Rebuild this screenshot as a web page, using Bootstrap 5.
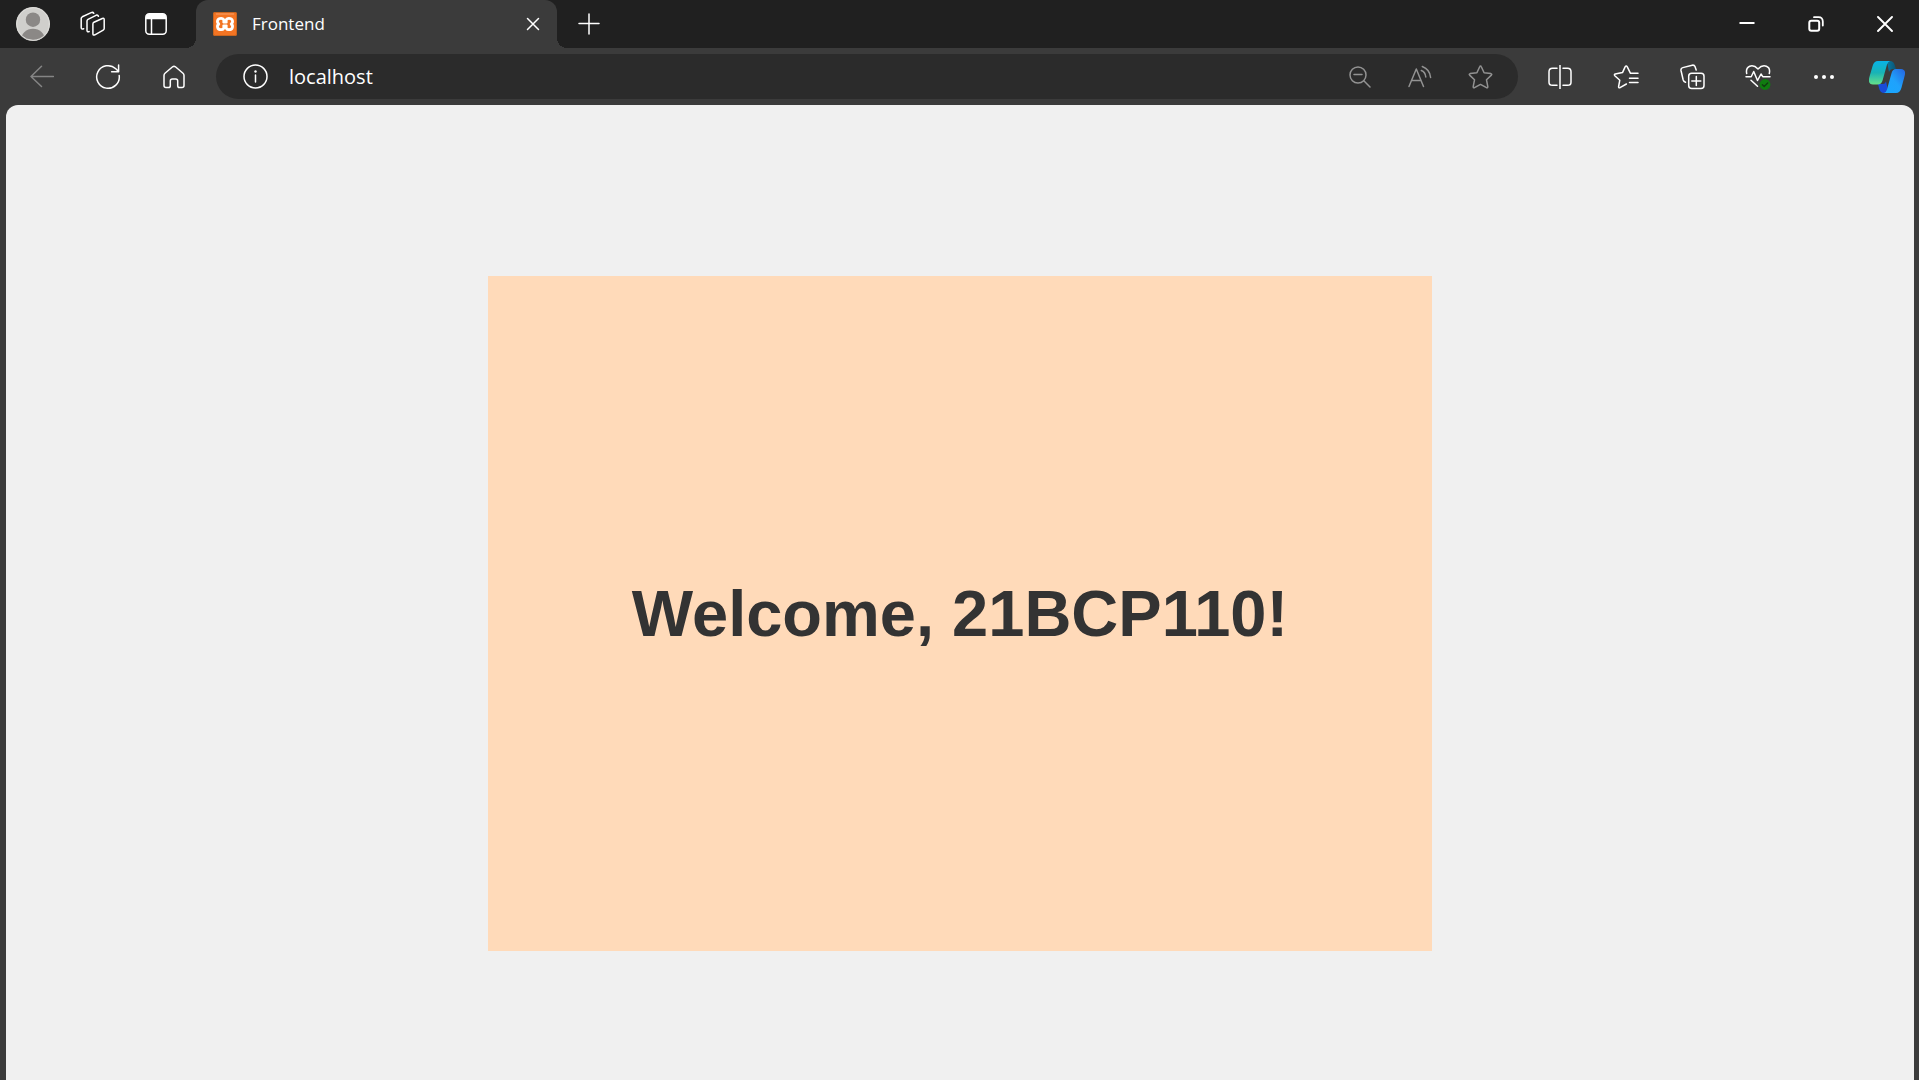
<!DOCTYPE html>
<html lang="en">
<head>
<meta charset="utf-8">
<meta name="viewport" content="width=device-width, initial-scale=1">
<title>Frontend</title>
<link href="https://cdn.jsdelivr.net/npm/bootstrap@5.3.0/dist/css/bootstrap.min.css" rel="stylesheet">
<style>
  :root { --strip: #202020; --bar: #3b3b3b; --field: #2b2b2b; --page: #f0f0f0; }
  body { background: var(--bar); color: #fff; font-family: "Open Sans", "Noto Sans", sans-serif; }
  .tab-strip { background: var(--strip); height: 48px; }
  .tool-row { height: 57px; padding-left: 9px; }
  .icon-btn { display: flex; align-items: center; justify-content: center; flex: none; height: 45px; width: 66px; padding: 0; border: 0; background: transparent; color: #fff; }
  .icon-btn svg, .site-info svg { fill: none; stroke: currentColor; stroke-width: 1.5; stroke-linecap: round; stroke-linejoin: round; }
  .w-workspaces { width: 54px; }
  .w-tabs { width: 72px; }
  .w-field { width: 60px; color: #929292; }
  .w-window { width: 69px; }
  .w-new { width: 64px; }
  .w-close { width: 24px; }
  .w-copilot { width: 62px; padding-right: 2px; }
  .is-off { color: #858585; }
  .browser-tab { position: relative; width: 361px; background: var(--bar); border-radius: 12px 12px 0 0; margin-left: 4px; padding: 0 12px 0 17px; gap: 15px; font-size: 17px; }
  .browser-tab::before, .browser-tab::after { content: ""; position: absolute; bottom: 0; width: 10px; height: 10px; }
  .browser-tab::before { right: 100%; background: radial-gradient(circle at 0 0, transparent 10px, var(--bar) 10px); }
  .browser-tab::after { left: 100%; background: radial-gradient(circle at 100% 0, transparent 10px, var(--bar) 10px); }
  .address { height: 45px; background: var(--field); margin: 0 9px; padding: 0 8px 0 27px; }
  .address input { color: #fff; background: transparent; border: 0; outline: 0; font-size: 20px; padding: 0 0 0 21px; min-width: 0; }
  .viewport { background: var(--page); border-radius: 12px 12px 0 0; margin: 0 5px 0 6px; padding-top: 171px; }
  .welcome { width: 944px; max-width: 100%; height: 675px; background: #ffdab9; color: #333; font-family: "Liberation Sans", Arial, sans-serif; }
  .welcome h1 { font-size: 65px; line-height: 75px; }
</style>
<script src="https://cdn.jsdelivr.net/npm/bootstrap@5.3.0/dist/js/bootstrap.bundle.min.js"></script>
</head>
<body class="vh-100 d-flex flex-column overflow-hidden">
<header>
  <div class="tab-strip d-flex align-items-center">
    <button class="icon-btn" aria-label="Profile">
      <svg width="34" height="34" viewBox="0 0 34 34"><defs><clipPath id="av"><circle cx="17" cy="17" r="16.5"/></clipPath></defs><circle cx="17" cy="17" r="17" fill="#d0cfcc" stroke="none"/><g clip-path="url(#av)" fill="#8b8886" stroke="none"><circle cx="17" cy="12.7" r="7.2"/><ellipse cx="17" cy="33" rx="12" ry="11.3"/></g><circle cx="17" cy="17" r="16.3" stroke="#deddda" stroke-width="1"/></svg>
    </button>
    <button class="icon-btn w-workspaces" aria-label="Workspaces">
      <svg width="26" height="26" viewBox="0 0 26 26"><path d="M14 11.200L22.300 7.500Q24.200 6.800 24.200 8.700V17.600Q24.200 18.700 23.200 19.200L14.900 23.800Q12.900 24.700 12.900 22.700V13Q12.900 11.800 14 11.200ZM9.200 20.500Q7.200 21.400 7 19.500V10Q7 8.800 8 8.300L16 4.300Q17.800 3.600 18.400 5.300M3.700 17.700Q1.200 18.700 1.200 16.500V7.600Q1.200 6.400 2.300 5.800L11.200 1.600Q13 .9 13.800 2.300"/></svg>
    </button>
    <button class="icon-btn w-tabs" aria-label="Tab actions">
      <svg width="22" height="22" viewBox="0 0 22 22"><rect x=".8" y=".8" width="20.400" height="20.400" rx="3.500"/><path d="M1 6V4Q1 1 4 1H18Q21 1 21 4V6Z" fill="currentColor" stroke="none"/><path d="M6.500 6V21M1 5.500H21"/></svg>
    </button>
    <div class="browser-tab d-flex align-items-center h-100">
      <svg width="24" height="24" viewBox="0 0 24 24" aria-hidden="true"><rect width="24" height="24" rx="2" fill="#f37423"/><path d="M3 2H21" stroke="#f9a06a"/><rect x=".5" y=".5" width="23" height="23" rx="1.500" fill="none" stroke="#c9651f"/><path d="M8.200 6.300C10.600 6.300 11.300 8.100 10.700 10.200H13.300C12.700 8.100 13.400 6.300 15.800 6.300C19.900 6.300 20.500 10.300 18.200 12C20.500 13.700 19.900 17.700 15.800 17.700C13.400 17.700 12.700 15.900 13.300 13.800H10.700C11.300 15.900 10.600 17.700 8.200 17.700C4.100 17.700 3.500 13.700 5.800 12C3.500 10.300 4.100 6.300 8.200 6.300Z" fill="none" stroke="#fff" stroke-width="2.800" stroke-linejoin="round"/></svg>
      <span class="flex-grow-1">Frontend</span>
      <button class="icon-btn w-close" aria-label="Close tab"><svg width="14" height="14" viewBox="0 0 14 14"><path d="M1.500 1.500L12.500 12.500M12.500 1.500L1.500 12.500"/></svg></button>
    </div>
    <button class="icon-btn w-new" aria-label="New tab"><svg width="22" height="22" viewBox="0 0 22 22"><path d="M11 1V21M1 10.500H21" stroke-width="1.500"/></svg></button>
    <div class="d-flex ms-auto">
      <button class="icon-btn w-window" aria-label="Minimize"><svg width="16" height="16" viewBox="0 0 16 16"><path d="M.5 7H15.500" stroke-width="2" stroke-linecap="butt"/></svg></button>
      <button class="icon-btn w-window" aria-label="Restore"><svg width="16" height="16" viewBox="0 0 16 16"><rect x="1.300" y="4.800" width="9.900" height="9.900" rx="2" stroke-width="2"/><path d="M6 1.200H10.500Q14.800 1.200 14.800 5.500V9.500" stroke-width="1.800"/></svg></button>
      <button class="icon-btn w-window" aria-label="Close window"><svg width="16" height="16" viewBox="0 0 16 16"><path d="M1 1L15 15M15 1L1 15" stroke-width="1.900"/></svg></button>
    </div>
  </div>
  <div class="tool-row d-flex align-items-center">
    <nav class="d-flex" aria-label="Navigation">
      <button class="icon-btn is-off" aria-label="Back" disabled><svg width="24" height="24" viewBox="0 0 24 24"><path d="M23.500 11.500H1M11.500 1.300L1 11.500L11.500 21.500"/></svg></button>
      <button class="icon-btn" aria-label="Refresh"><svg width="26" height="26" viewBox="0 0 26 26"><path d="M24.200 11.500A11.300 11.300 0 1 1 20.800 4.800L23.500 7.500M23.600 1V7.800H16.600"/></svg></button>
      <button class="icon-btn" aria-label="Home"><svg width="22" height="24" viewBox="0 0 22 24"><path d="M2 8.200L9.600 1.800Q11 .7 12.400 1.800L20 8.200Q21 9.100 21 10.400V20.500Q21 22.500 19 22.500H16.500Q14.700 22.500 14.700 20.700V16Q14.700 14 12.700 14H9.300Q7.300 14 7.300 16V20.700Q7.300 22.500 5.500 22.500H3Q1 22.500 1 20.500V10.400Q1 9.100 2 8.200Z"/></svg></button>
    </nav>
    <form class="address d-flex align-items-center flex-grow-1 rounded-pill">
      <span class="site-info d-flex"><svg width="25" height="25" viewBox="0 0 25 25" aria-hidden="true"><circle cx="12.500" cy="12.500" r="11.500"/><path d="M12.500 11V18"/><circle cx="12.500" cy="7.500" r="1.200" fill="currentColor" stroke="none"/></svg></span>
      <input class="flex-grow-1" type="text" value="localhost" aria-label="Address">
      <button type="button" class="icon-btn w-field" aria-label="Zoom out"><svg width="22" height="22" viewBox="0 0 22 22"><circle cx="9" cy="9" r="8"/><path d="M5 8.500H13M14.800 14.800L21 21"/></svg></button>
      <button type="button" class="icon-btn w-field" aria-label="Read aloud"><svg width="24" height="24" viewBox="0 0 24 24"><path d="M1 21.500L8.300 4L15.500 21.500M3.600 15.500H13M13.300 5.500Q17.300 7 17.800 12M14.300 1.500Q22 4.500 22.600 12.500"/></svg></button>
      <button type="button" class="icon-btn w-field" aria-label="Add to favorites"><svg width="25" height="24" viewBox="0 0 25 24"><path d="M12.500 1Q13 1 13.300 1.700L16.100 7.700L22.900 8.600Q24.300 9 23.400 10.100L18.500 14.800L19.800 21.600Q19.900 23.200 18.500 22.700L12.500 19.400L6.500 22.700Q5.100 23.200 5.200 21.600L6.500 14.800L1.600 10.100Q.7 9 2.100 8.600L8.900 7.700L11.700 1.700Q12 1 12.500 1Z"/></svg></button>
    </form>
    <div class="d-flex">
      <button class="icon-btn" aria-label="Split screen"><svg width="24" height="24" viewBox="0 0 24 24"><path d="M12 0V24M9 3.300H4.500Q1 3.300 1 6.800V17.200Q1 20.300 4.500 20.300H9M15 3.300H19.500Q23 3.300 23 6.800V17.200Q23 20.300 19.500 20.300H15"/></svg></button>
      <button class="icon-btn" aria-label="Favorites"><svg width="26" height="24" viewBox="0 0 26 24"><path d="M25 8.300H17.500L14.300 1.900Q13.200 .3 12.100 1.900L9.500 7.600L2.200 9Q.8 9.600 1.800 10.700L6.800 15.200L5.600 21.500Q5.500 23.300 7 22.700L13.400 19M16.500 13.200H25M16.500 17.500H25"/></svg></button>
      <button class="icon-btn" aria-label="Collections"><svg width="25" height="26" viewBox="0 0 25 26"><rect x="8.700" y="9.300" width="15.300" height="15.300" rx="3"/><path d="M16.300 12.500V21.500M11.800 17H20.800M5.500 18.200Q3.700 17.700 3.200 16L1 6.500Q.6 4.200 2.800 3.600L12.200 1.200Q14.300 .8 15 2.500L16.200 6"/></svg></button>
      <button class="icon-btn" aria-label="Browser essentials"><svg width="26" height="26" viewBox="0 0 26 26"><path d="M1.700 9.500C.2 2 7.500-.9 13 5C18.500-.9 26 2 24.300 9.500M1 12.700H6.200L8.700 7.500L12.500 16.500L16 10L17.800 12.700H25M6 16.200L12.500 22.300"/><circle cx="20" cy="20.500" r="5.400" fill="#107c10" stroke="none"/><path d="M17.400 20.700L19.200 22.400L22.700 18.900" stroke="#113c11" stroke-width="1.400"/></svg></button>
      <button class="icon-btn" aria-label="Settings and more"><svg width="20" height="6" viewBox="0 0 20 6"><g fill="currentColor" stroke="none"><circle cx="2" cy="3" r="2"/><circle cx="10" cy="3" r="2"/><circle cx="18" cy="3" r="2"/></g></svg></button>
      <button class="icon-btn w-copilot" aria-label="Copilot"><svg width="36" height="32" viewBox="0 0 36 32"><defs><linearGradient id="ca" x1="0" y1="0" x2="0" y2="1"><stop stop-color="#08b3e8"/><stop offset=".5" stop-color="#19b3b5"/><stop offset="1" stop-color="#65e08a"/></linearGradient><linearGradient id="cb" x1="0" y1="1" x2="1" y2="0"><stop stop-color="#18a8ff"/><stop offset=".5" stop-color="#1fa2fc"/><stop offset="1" stop-color="#2663df"/></linearGradient><linearGradient id="cc"><stop stop-color="#087fa9"/><stop offset="1" stop-color="#0a5575"/></linearGradient></defs><g stroke="none"><path d="M16 0H21Q24.500 0 25.500 3.500L27 8H24Q21 8 20 11L18.500 3Z" fill="url(#cc)"/><path d="M9 23H14Q16 23 17 20.500L18.500 27L20 32H15Q11 32 10 27Z" fill="#194bd7"/><path d="M9 0H21Q18.800 .5 18 3.500L13.700 19Q12.600 23.500 8.500 23.500H4Q-1.500 23.500 .4 16L3.600 5Q5 0 9 0Z" fill="url(#ca)"/><path d="M27 8H32Q37.500 8.500 35.600 15L32.400 27Q31 32 27 32H15Q17.200 31.500 18 28.500L22.300 13Q23.400 8 27 8Z" fill="url(#cb)"/></g></svg></button>
    </div>
  </div>
</header>
<main class="viewport flex-grow-1 d-flex justify-content-center align-items-start">
  <section class="welcome d-flex align-items-center justify-content-center flex-shrink-0">
    <h1 class="fw-bold m-0 text-center">Welcome, 21BCP110!</h1>
  </section>
</main>
</body>
</html>
